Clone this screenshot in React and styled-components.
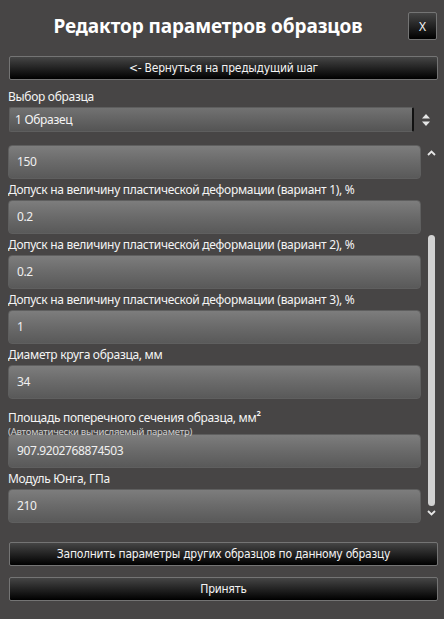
import React from "react";
import styled, { createGlobalStyle } from "styled-components";

const GlobalStyle = createGlobalStyle`
  html, body {
    margin: 0;
    padding: 0;
    background: #474545;
  }
  * {
    box-sizing: border-box;
  }
`;

const Window = styled.div`
  width: 444px;
  height: 619px;
  background: #474545;
  padding: 12px 7px 0 8px;
  display: flex;
  flex-direction: column;
  font-family: "Noto Sans", "Open Sans", sans-serif;
  color: #f2f2f2;
`;

const Header = styled.div`
  display: flex;
  align-items: center;
  height: 28px;
`;

const Title = styled.h1`
  flex: 1;
  margin: 0;
  text-align: center;
  font-size: 19px;
  font-weight: 700;
  color: #ffffff;
  letter-spacing: -0.1px;
`;

const DarkButton = styled.button`
  display: block;
  border: 1px solid #747474;
  border-radius: 2px;
  background: linear-gradient(#454545 0%, #262626 45%, #000 100%);
  color: #f4f4f4;
  font-family: "Liberation Sans Narrow", "DejaVu Sans Condensed", sans-serif;
  font-size: 12px;
  letter-spacing: -0.25px;
  padding: 0;
  cursor: pointer;
`;

const CloseButton = styled(DarkButton)`
  width: 29px;
  height: 28px;
  font-family: "Noto Sans", sans-serif;
  font-size: 12px;
  letter-spacing: 0;
`;

const WideButton = styled(DarkButton)`
  width: 429px;
  height: ${(p) => p.$h || 24}px;
  margin-top: ${(p) => p.$mt || 0}px;
  margin-left: 1px;
`;

const FieldLabel = styled.div`
  font-size: 12px;
  letter-spacing: -0.3px;
  line-height: 16px;
  padding-top: ${(p) => p.$pt ?? 3}px;
  height: ${(p) => p.$h || 21}px;
  white-space: nowrap;
  color: #f4f4f4;
  sup {
    font-size: 7.5px;
    vertical-align: 6px;
    font-weight: 700;
  }
`;

const SubNote = styled.div`
  font-size: 9.5px;
  letter-spacing: -0.2px;
  line-height: 12px;
  color: #d0d0d0;
`;

const SelectRow = styled.div`
  display: flex;
  align-items: center;
  height: 25px;
`;

const SelectBox = styled.div`
  width: 405px;
  height: 25px;
  margin-left: 1px;
  border: 1px solid #5e5e5e;
  border-right: 2px solid #111;
  border-radius: 2px;
  background: linear-gradient(#727272, #545454);
  font-size: 12px;
  letter-spacing: -0.3px;
  line-height: 23px;
  padding-left: 5px;
  color: #f4f4f4;
`;

const Spinner = styled.div`
  flex: 1;
  display: flex;
  justify-content: center;
`;

const ScrollArea = styled.div`
  display: flex;
  margin-top: 11px;
  height: 382px;
`;

const Viewport = styled.div`
  width: 413px;
  height: 382px;
  overflow-y: scroll;
  scrollbar-width: none;
  &::-webkit-scrollbar {
    display: none;
  }
`;

const ValueBox = styled.div`
  height: 34px;
  border: 1px solid #5f5f5f;
  border-radius: 4px;
  background: linear-gradient(#7d7d7d 0%, #6a6a6a 50%, #595959 100%);
  font-size: 12px;
  letter-spacing: -0.4px;
  line-height: 32px;
  padding-left: 8px;
  color: #f0f0f0;
`;

const ScrollBar = styled.div`
  width: 16px;
  display: flex;
  flex-direction: column;
  align-items: center;
  padding-left: 4px;
`;

const Track = styled.div`
  flex: 1;
  width: 7px;
  display: flex;
  flex-direction: column;
  padding-top: 79px;
  padding-bottom: 4px;
`;

const Thumb = styled.div`
  flex: 1;
  background: #d2d2d2;
  border-radius: 4px;
`;

const Arrow = styled.svg`
  display: block;
  margin: ${(p) => p.$m};
`;

const fields = [
  { label: "Длина рабочей части образца, мм", value: "150" },
  {
    label: "Допуск на величину пластической деформации (вариант 1), %",
    value: "0.2",
  },
  {
    label: "Допуск на величину пластической деформации (вариант 2), %",
    value: "0.2",
  },
  {
    label: "Допуск на величину пластической деформации (вариант 3), %",
    value: "1",
  },
  { label: "Диаметр круга образца, мм", value: "34" },
  {
    label: (
      <>
        Площадь поперечного сечения образца, мм<sup>2</sup>
      </>
    ),
    note: "(Автоматически вычисляемый параметр)",
    value: "907.9202768874503",
  },
  { label: "Модуль Юнга, ГПа", value: "210" },
];

export default function App() {
  const viewRef = React.useRef(null);

  React.useLayoutEffect(() => {
    // the list is shown scrolled a little, as in the editor
    if (viewRef.current) viewRef.current.scrollTop = 19;
  }, []);

  return (
    <>
      <GlobalStyle />
      <Window>
        <Header>
          <Title>Редактор параметров образцов</Title>
          <CloseButton>X</CloseButton>
        </Header>
        <WideButton $mt={16}>&lt;- Вернуться на предыдущий шаг</WideButton>

        <FieldLabel $pt={9} $h={27}>
          Выбор образца
        </FieldLabel>
        <SelectRow>
          <SelectBox>1 Образец</SelectBox>
          <Spinner>
            <svg width="8" height="12" viewBox="0 0 8 12">
              <path d="M4 0 L8 4.5 L0 4.5 Z" fill="#e6e6e6" />
              <path d="M4 12 L8 7.5 L0 7.5 Z" fill="#e6e6e6" />
            </svg>
          </Spinner>
        </SelectRow>

        <ScrollArea>
          <Viewport ref={viewRef}>
            {fields.map((f, i) => (
              <div key={i}>
                <FieldLabel $pt={f.note ? 6 : 3} $h={f.note ? 35 : 21}>
                  {f.label}
                  {f.note && <SubNote>{f.note}</SubNote>}
                </FieldLabel>
                <ValueBox>{f.value}</ValueBox>
              </div>
            ))}
            <div style={{ height: 40 }} />
          </Viewport>
          <ScrollBar>
            <Arrow width="9" height="6" viewBox="0 0 9 6" $m="7px 0 0 0">
              <path
                d="M1 5 L4.5 1.5 L8 5"
                fill="none"
                stroke="#e6e6e6"
                strokeWidth="1.8"
              />
            </Arrow>
            <Track>
              <Thumb />
            </Track>
            <Arrow width="9" height="6" viewBox="0 0 9 6" $m="0 0 9px 0">
              <path
                d="M1 1 L4.5 4.5 L8 1"
                fill="none"
                stroke="#e6e6e6"
                strokeWidth="1.8"
              />
            </Arrow>
          </ScrollBar>
        </ScrollArea>

        <WideButton $mt={17}>
          Заполнить параметры других образцов по данному образцу
        </WideButton>
        <WideButton $mt={11}>Принять</WideButton>
      </Window>
    </>
  );
}
